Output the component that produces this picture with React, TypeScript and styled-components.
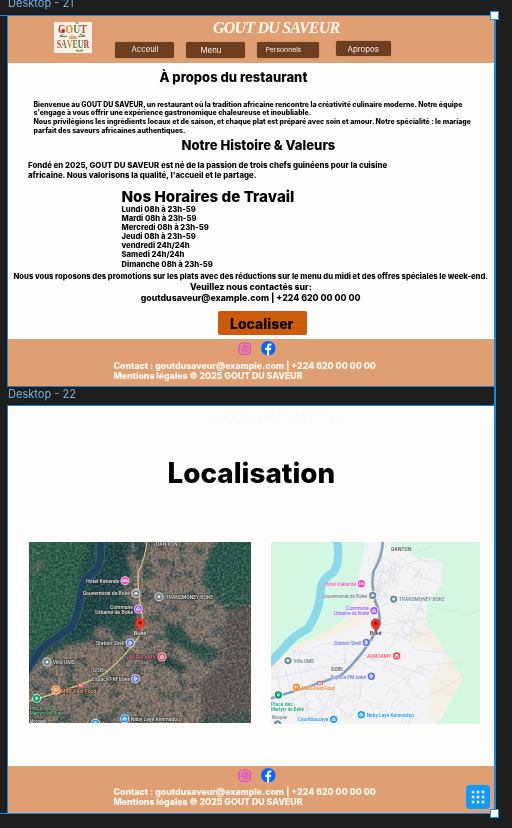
import React from 'react';
import styled, { createGlobalStyle } from 'styled-components';

const GlobalStyle = createGlobalStyle`
  * { box-sizing: border-box; }
  html, body { margin: 0; background: #1e1e1e; }
  body { width: 512px; height: 828px; overflow: hidden; font-family: Inter, sans-serif; }
  h1, h2, h3, p, ul { margin: 0; padding: 0; list-style: none; }
`;

const Canvas = styled.main`
  position: relative;
  width: 512px;
  height: 828px;
  padding: 0 16px 0 8px;
  overflow: hidden;
  background: #1e1e1e;
`;

const FrameLabel = styled.div<{ $height: number; $first?: boolean }>`
  display: flex;
  align-items: ${p => (p.$first ? 'flex-end' : 'flex-start')};
  height: ${p => p.$height}px;
  padding: ${p => (p.$first ? '0 0 6px' : '1px 0 0')};
  color: #6fb1e0;
  font-size: 11.05px;
  line-height: 14px;
  white-space: nowrap;
`;

const Frame = styled.section<{ $height: number }>`
  display: flex;
  flex-direction: column;
  width: 486.5px;
  height: ${p => p.$height}px;
  background: #fffdfb;
  outline: 1px solid #1b7fd0;
`;

const Header = styled.header`
  display: flex;
  height: 46.5px;
  background: #df9f72;
`;

const LogoSlot = styled.div`
  width: 107px;
  padding: 5.5px 0 0 46px;
  svg { display: block; }
`;

const HeaderBody = styled.div`
  flex: 1;
`;

const Brand = styled.h1<{ $ghost?: boolean }>`
  width: 130px;
  height: 24px;
  margin-left: ${p => (p.$ghost ? 205 : 98)}px;
  color: ${p => (p.$ghost ? '#fff9f6' : '#fff8f0')};
  font: italic 700 16px/24px 'Liberation Serif', serif;
  letter-spacing: -0.8px;
  white-space: nowrap;
`;

const Nav = styled.nav`
  display: flex;
  align-items: flex-start;
  padding-top: 1.6px;
`;

const NavButton = styled.button<{ $w: number; $h: number; $gap: number; $pad: number; $size: number; $drop: number }>`
  width: ${p => p.$w}px;
  height: ${p => p.$h}px;
  margin: ${p => p.$drop}px 0 0 ${p => p.$gap}px;
  padding: 0 0 0 ${p => p.$pad}px;
  border: 0;
  border-radius: 2px;
  background: #6d3f20;
  box-shadow: 0 0 1px #6d3f20;
  color: #f8ede5;
  font: 400 ${p => p.$size}px/14px Inter, sans-serif;
  text-align: left;
  white-space: nowrap;
`;

const Content = styled.div`
  display: flex;
  flex-direction: column;
  flex: 1;
`;

const Heading = styled.h2<{ $size: number; $left: number; $gap: number }>`
  margin: ${p => p.$gap}px 0 0 ${p => p.$left}px;
  font-weight: 800;
  font-size: ${p => p.$size}px;
  line-height: 16px;
  white-space: nowrap;
`;

const Copy = styled.p<{ $size: number; $line: number; $left: number; $gap: number }>`
  margin: ${p => p.$gap}px 0 0 ${p => p.$left}px;
  font-weight: 800;
  font-size: ${p => p.$size}px;
  line-height: ${p => p.$line}px;
  white-space: nowrap;
`;

const Hours = styled.ul`
  margin-left: 113.5px;
  font-weight: 800;
  font-size: 7.66px;
  line-height: 9.13px;
`;

const LocateButton = styled.button`
  width: 88.5px;
  height: 24px;
  margin: 7.7px 0 0 210px;
  padding: 1px 0 0 12px;
  border: 0;
  border-radius: 2px;
  background: #cb5b08;
  color: #000;
  font: 800 13.99px/23px Inter, sans-serif;
  text-align: left;
`;

const FooterBar = styled.footer<{ $height: number }>`
  height: ${p => p.$height}px;
  background: #df9f72;
  color: #fffaf5;
`;

const Socials = styled.div`
  display: flex;
  align-items: center;
  gap: 10px;
  height: 21.2px;
  padding: 0 0 1px 229.5px;
`;

const Title = styled.h2`
  margin: 22.5px 0 0 159.5px;
  height: 40px;
  font-weight: 800;
  font-size: 27.85px;
  line-height: 40px;
`;

const Maps = styled.div`
  display: flex;
  gap: 20px;
  padding: 49px 0 0 21px;
  svg { display: block; }
`;

const SelectionLine = styled.div<{ $x?: number; $y?: number }>`
  position: absolute;
  background: #1787e0;
  ${p => (p.$y !== undefined ? `left: 0; width: 495px; height: 1.5px; top: ${p.$y}px;` : `top: 15px; height: 798px; width: 2px; left: ${p.$x}px;`)}
`;

const Handle = styled.i<{ $y: number }>`
  position: absolute;
  left: 490px;
  top: ${p => p.$y}px;
  width: 9px;
  height: 9px;
  border: 1px solid #1592f0;
  background: #fff;
`;

const GridButton = styled.button`
  position: absolute;
  left: 466px;
  top: 785px;
  display: grid;
  grid-template-columns: repeat(3, 2px);
  place-content: center;
  gap: 3px;
  width: 24px;
  height: 24px;
  padding: 0;
  border: 0;
  border-radius: 4px;
  background: #1199fc;
`;

const Dot = styled.i`
  height: 2px;
  background: #fff;
  box-shadow: 0 0 0 0.5px rgba(255, 255, 255, 0.45);
`;

const Grain = styled.rect`
  mix-blend-mode: soft-light;
`;

const Logo = () => (
  <svg width="38" height="31" viewBox="0 0 114 93" fontFamily="'Liberation Serif', serif" fontWeight="700">
    <rect width="114" height="93" fill="#f8f2ea" />
    <text x="12" y="34" fontSize="35" textLength="86" lengthAdjust="spacingAndGlyphs">
      <tspan fill="#c93822">G</tspan><tspan fill="#e08a2b">O</tspan><tspan fill="#4f7f37">Û</tspan><tspan fill="#c84225">T</tspan>
    </text>
    <text x="8" y="79" fontSize="36" textLength="98" lengthAdjust="spacingAndGlyphs">
      <tspan fill="#c93822">S</tspan><tspan fill="#4f7f37">A</tspan><tspan fill="#d9792a">V</tspan><tspan fill="#6b7d32">E</tspan><tspan fill="#3f7138">U</tspan><tspan fill="#c93822">R</tspan>
    </text>
    <text x="45" y="51" fontSize="21" fill="#bb7a2a">du</text>
    <path d="M17 43h22M72 43h22M18 41l9-3M92 41l-15-4" stroke="#63743b" strokeWidth="3" />
    <path d="M64 86q9-8 12 1q10-9 13-1q-12 6-25 0" fill="#799a57" />
    <circle cx="27" cy="27" r="5" fill="#c32219" />
  </svg>
);

const Instagram = () => (
  <svg width="13.5" height="13.5" viewBox="0 0 42 42" fill="none" stroke="#e23fe4" strokeWidth="4">
    <rect x="3" y="3" width="36" height="36" rx="14" />
    <rect x="10.5" y="10.5" width="21" height="21" rx="7" strokeWidth="3" />
    <circle cx="21" cy="21" r="5" strokeWidth="3.4" />
    <circle cx="28" cy="14" r="1" strokeWidth="2" />
  </svg>
);

const Facebook = () => (
  <svg width="14.5" height="14.5" viewBox="0 0 24 24">
    <circle cx="12" cy="12" r="12" fill="#0866ff" />
    <path d="M10 24v-9H7v-3.8h3V9c0-3.4 1.8-5 4.7-5 1 0 1.8.1 2.5.3v3.3h-1.8c-1.4 0-1.9.7-1.9 2v1.6h3.5l-.7 3.8h-2.8v9z" fill="#fff" />
  </svg>
);

const Footer = ({ height, gap = 0 }: { height: number; gap?: number }) => (
  <FooterBar $height={height}>
    <Socials><Instagram /><Facebook /></Socials>
    <Copy $size={8.79} $line={10.6} $left={105.5} $gap={gap}>
      Contact : goutdusaveur@example.com | +224 620 00 00 00
    </Copy>
    <Copy $size={8.77} $line={10.6} $left={105.5} $gap={0}>Mentions légales © 2025 GOUT DU SAVEUR</Copy>
  </FooterBar>
);

type Place = { x: number; y: number; color: string; tx?: number; ty?: number; w?: number; lines?: string[]; text?: string; end?: boolean; kind: string };

const glyphs: Record<string, React.ReactNode> = {
  bed: <path d="M-6-4v8M-6 1H6V4M-2-2H6V1" />,
  star: <path d="M0-5v10M-5 0H5M-3-3l6 6M-3 3l6-6" />,
  hall: <path d="M-5 5V-2L0-5l5 3v7M-2 5V1h4v4" />,
  pump: <path d="M-4 5V-5h5V5zM1-2h3v5" />,
  dot: <circle r="3" fill="#fff" />,
  fork: <path d="M-3-5v10M3-5v10M-5-4v4h4v-4" />,
  tree: <path d="M0 5V0M-4 1L0-5 4 1z" />,
  shop: <path d="M-5-1h10v5H-5zM-4-4h8" />,
};

const Marker = ({ p, satellite }: { p: Place; satellite: boolean }) => (
  <g>
    <circle cx={p.x} cy={p.y} r="13.5" fill="#fff" opacity=".85" />
    <circle cx={p.x} cy={p.y} r="11" fill={p.color} />
    <g transform={`translate(${p.x} ${p.y})`} fill="none" stroke="#fff" strokeWidth="2.4">{glyphs[p.kind]}</g>
    {(p.lines ?? []).map((line, i) => (
      <text
        key={line}
        x={p.tx}
        y={(p.ty ?? p.y + 6) + i * 15}
        textAnchor={p.end ? 'end' : 'start'}
        textLength={i === (p.lines!.length - 1) ? p.w : undefined}
        lengthAdjust="spacingAndGlyphs"
        fill={satellite ? (p.text ?? '#e4e5e1') : (p.text ?? p.color)}
        stroke={satellite ? '#292c2b' : '#fff'}
        strokeWidth={satellite ? 3 : 1.5}
        paintOrder="stroke"
      >{line}</text>
    ))}
  </g>
);

const satellitePlaces: Place[] = [
  { x: 315, y: 135, color: '#f54bc4', kind: 'bed', tx: 298, end: true, w: 100, ty: 142, lines: ['Hotel Kakande'] },
  { x: 348, y: 173, color: '#71858e', kind: 'star', tx: 330, end: true, w: 142, ty: 179, lines: ['Gouvernorat de Boké'] },
  { x: 355, y: 220, color: '#a154f4', kind: 'hall', tx: 339, end: true, w: 113, ty: 220, lines: ['Commune', 'Urbaine de Boké'] },
  { x: 331, y: 322, color: '#6174db', kind: 'pump', tx: 314, end: true, w: 86, lines: ['Station Shell'] },
  { x: 81, y: 379, color: '#71858e', kind: 'dot', tx: 98, w: 67, lines: ['Villa UMS'] },
  { x: 347, y: 429, color: '#6174db', kind: 'pump', tx: 330, end: true, w: 114, lines: ['Espace FM boké'] },
  { x: 108, y: 463, color: '#fa8427', kind: 'fork', tx: 123, w: 106, ty: 471, lines: ['MMS Fast Food'], text: '#ffb177' },
  { x: 50, y: 488, color: '#0ca564', kind: 'tree', tx: 29, w: 102, ty: 522, lines: ['Place des', 'Martyrs de Boké'], text: '#80cda2' },
  { x: 426, y: 364, color: '#ed4659', kind: 'shop', tx: 408, end: true, w: 82, lines: ['AFRICAMY'], text: '#f17c87' },
  { x: 417, y: 183, color: '#71858e', kind: 'dot', tx: 437, w: 142, ty: 190, lines: ['TRANSMONEY BOKE'] },
  { x: 314, y: 549, color: '#1696f4', kind: 'shop', tx: 332, w: 148, ty: 557, lines: ['Naby Laye Kenmadou'] },
  { x: 226, y: 563, color: '#1696f4', kind: 'shop' },
];

const planPlaces: Place[] = [
  { x: 298, y: 146, color: '#f54bc4', kind: 'bed', tx: 282, end: true, w: 94, ty: 153, lines: ['Hotel Kakande'] },
  { x: 332, y: 181, color: '#71919c', kind: 'star', tx: 315, end: true, w: 136, ty: 188, lines: ['Gouvernorat de Boké'], text: '#657e88' },
  { x: 336, y: 227, color: '#a154f4', kind: 'hall', tx: 321, end: true, w: 106, ty: 226, lines: ['Commune', 'Urbaine de Boké'] },
  { x: 313, y: 322, color: '#6174db', kind: 'pump', tx: 298, end: true, w: 82, ty: 329, lines: ['Station Shell'] },
  { x: 78, y: 376, color: '#71919c', kind: 'dot', tx: 94, w: 62, lines: ['Villa UMS'], text: '#657e88' },
  { x: 328, y: 423, color: '#6174db', kind: 'pump', tx: 312, end: true, w: 106, ty: 431, lines: ['Espace FM boké'] },
  { x: 103, y: 456, color: '#fa8427', kind: 'fork', tx: 119, w: 100, ty: 464, lines: ['MMS Fast Food'], text: '#e6700e' },
  { x: 49, y: 479, color: '#0ca564', kind: 'tree', tx: 27, w: 99, ty: 511, lines: ['Place des', 'Martyrs de Boké'] },
  { x: 404, y: 362, color: '#ed4659', kind: 'shop', tx: 387, end: true, w: 72, ty: 369, lines: ['AFRICAMY'] },
  { x: 395, y: 192, color: '#71919c', kind: 'dot', tx: 411, w: 137, ty: 199, lines: ['TRANSMONEY BOKE'], text: '#657e88' },
  { x: 298, y: 538, color: '#1696f4', kind: 'shop', tx: 314, w: 142, ty: 545, lines: ['Naby Laye Kenmadou'] },
  { x: 215, y: 552, color: '#1696f4', kind: 'shop', tx: 199, end: true, w: 92, ty: 558, lines: ['Countbassaya'] },
  { x: 47, y: 566, color: '#71919c', kind: 'dot', tx: 29, w: 47, ty: 551, lines: ['Mosquée'], text: '#657e88' },
];

const Pin = ({ x, y }: { x: number; y: number }) => (
  <g transform={`translate(${x} ${y})`}>
    <path d="M0 0c-3-13-14-15-14-27a14 14 0 0 1 28 0c0 12-11 14-14 27z" fill="#e8392e" stroke="#b9251c" strokeWidth="1.5" />
    <circle cy="-27" r="5" fill="#8e150f" />
  </g>
);

/* Short street segments scattered with a fixed seed, so every render is identical. */
const streets = (seed: number, count: number, x0: number, y0: number, w: number, h: number, len: number) => {
  let s = seed;
  const next = () => (s = (s * 16807) % 2147483647) / 2147483647;
  let d = '';
  for (let i = 0; i < count; i++) {
    const x = x0 + next() * w;
    const y = y0 + next() * h;
    const a = next() * 0.9 + (next() > 0.5 ? 1.6 : 0);
    const l = len * (0.3 + next());
    d += `M${x.toFixed(0)} ${y.toFixed(0)}l${(Math.cos(a) * l).toFixed(0)} ${(Math.sin(a) * l).toFixed(0)}`;
  }
  return d;
};

const river = 'M239 10Q250 80 225 107Q188 127 181 177Q179 228 155 273Q110 306 70 334Q45 360 15 417';

const SatelliteMap = () => (
  <svg width="222" height="181.7" viewBox="27 19 666 545" preserveAspectRatio="none" fontFamily="Roboto, sans-serif" fontSize="15" fontWeight="500">
    <defs>
      <filter id="grain" x="0" y="0" width="1" height="1" colorInterpolationFilters="sRGB">
        <feTurbulence type="fractalNoise" baseFrequency=".14" numOctaves="2" seed="8" />
        <feColorMatrix values="2 0 0 0 -.5  2 0 0 0 -.5  2 0 0 0 -.5  0 0 0 0 1" />
      </filter>
      <filter id="groves" x="0" y="0" width="1" height="1" colorInterpolationFilters="sRGB">
        <feTurbulence type="fractalNoise" baseFrequency=".03" numOctaves="4" seed="5" />
        <feColorMatrix values="0 0 0 0 .2  0 0 0 0 .3  0 0 0 0 .3  0 7 0 0 -3.6" />
      </filter>
      <filter id="soft" x="-.2" y="-.2" width="1.4" height="1.4"><feGaussianBlur stdDeviation="6" /></filter>
    </defs>
    <rect x="27" y="19" width="666" height="545" fill="#7b7067" />
    <rect x="27" y="19" width="666" height="545" filter="url(#groves)" opacity=".65" />
    <path d={streets(41, 420, 300, 20, 270, 540, 24) + streets(97, 420, 60, 330, 420, 230, 24)} stroke="#b0967f" strokeWidth="2" opacity=".45" />
    <g filter="url(#soft)">
      <path d="M20 10H345L313 55 340 110 303 175 351 217 350 270 290 320 270 275 230 275 200 320 145 327 80 362 20 410Z" fill="#264d46" />
      <path d="M20 10H210L180 100 165 235 60 330 20 350Z" fill="#2f5e4c" />
      <path d="M245 20l80 20-15 120-70 100-70 50-30-30 60-100 20-90z" fill="#234447" />
      <path d="M590 10l110 0v200l-60 30-50-45-45-55 15-65z" fill="#2b574c" />
      <path d="M700 205l-70 20-25 80 0 70-60 70 0 130h150z" fill="#5c5753" />
      <path d="M435 255l50 20 25 40 70 20 25 30-50 12-120-70z" fill="#2a5047" />
      <path d="M395 350l50 10 60 35-20 15-70-25z" fill="#25443f" />
      <path d="M345 15l40 10-5 35-30 20z" fill="#2a4744" />
      <path d="M550 545l140-20v50H540z" fill="#425650" />
    </g>
    <path d="M27 90l45-18v25l-30 20zM30 30l35 20-20 10z" fill="#65695e" opacity=".5" />
    <path d={streets(73, 70, 540, 100, 145, 430, 45)} stroke="#8c8376" strokeWidth="2" opacity=".25" />
    <path d="M537 208l80 120-10 40M515 175l30 60 45 80M550 165l50 120M540 245l145-70M535 220l110-65M600 15l-40 40-150 5M575 220l60-15 60 5M370 355l210 0 70-30M505 400l180-30M515 560l15-160 30-35M395 20l5 130" fill="none" stroke="#8e8478" strokeWidth="2.5" opacity=".6" />
    <Grain x="27" y="19" width="666" height="545" filter="url(#grain)" opacity=".4" />
    <path d={river} fill="none" stroke="#4f7672" strokeWidth="25" />
    <path d={river} fill="none" stroke="#1e4260" strokeWidth="22" />
    <path d="M382 10Q377 65 355 110Q352 160 363 220Q378 278 353 308Q290 393 235 425Q135 467 27 496" fill="none" stroke="#dfc784" strokeWidth="3.5" />
    <rect x="173" y="444" width="19" height="13" rx="2" fill="#d94b56" />
    <g fill="#e4e5e1" stroke="#292c2b" strokeWidth="3" paintOrder="stroke">
      <text x="407" y="31" textLength="66">DANTON</text>
      <text x="218" y="410" textLength="36">GOBI</text>
      <text x="29" y="563" textLength="50" lengthAdjust="spacingAndGlyphs">Mosquée</text>
      <text x="176" y="455" fontSize="10" stroke="none">N3</text>
    </g>
    {satellitePlaces.map(p => <Marker key={`${p.x}-${p.y}`} p={p} satellite />)}
    <text x="341" y="299" fontSize="17" fill="#fff" stroke="#222" strokeWidth="3" paintOrder="stroke">Boké</text>
    <Pin x={360} y={288} />
  </svg>
);

const PlanMap = () => (
  <svg width="209" height="182" viewBox="27 21 627 545" preserveAspectRatio="none" fontFamily="Roboto, sans-serif" fontSize="15" fontWeight="500">
    <rect x="27" y="21" width="627" height="545" fill="#f3f2f4" />
    <path d="M27 385L85 330 150 300 215 280 275 235 310 180 350 150 340 240 260 290 190 310 120 335 75 365 45 400 27 450Z" fill="#f6efe5" />
    <path d="M27 21H310L300 80 290 115 295 150 265 225 240 260 190 290 100 330 27 390Z" fill="#d3f7e2" />
    <path d="M380 21H654V566H518L535 555 603 430 490 255 500 190 540 150 538 78 520 72 465 70 440 50 405 40Z" fill="#d3f7e2" />
    <path d="M442 280H480L486 250 603 430 525 560 492 548 507 500 500 440 555 352 440 320Z" fill="#f4efe5" />
    <g fill="none" stroke="#d8dee4" strokeWidth="2">
      <path d={streets(23, 80, 345, 70, 150, 230, 36) + streets(61, 100, 100, 340, 370, 210, 38) + streets(15, 30, 320, 60, 60, 150, 28)} />
      <path d="M345 290Q440 290 460 345L555 352M395 455L480 390 595 382M485 490L595 430M360 390L430 430 470 490M45 410L70 560M70 400L110 560M110 390L145 560M30 430L310 370M80 500L290 390M145 550L320 435M240 330L310 390M135 355Q180 310 220 330L270 315M170 560L240 400M345 370L490 420M410 60L490 130 530 145M360 115L470 75 545 80M340 220L440 180 500 175M360 270L490 250M430 65L510 35" />
      <path d="M490 210L550 225 585 230 604 240 654 225" />
    </g>
    <path d="M224 10Q237 80 214 112Q174 132 175 181Q168 237 137 281Q94 302 67 337Q45 362 18 388" fill="none" stroke="#8bd7eb" strokeWidth="25" />
    <path d="M363 10Q362 66 335 108Q326 145 340 200Q365 255 341 290Q300 365 238 420Q155 451 20 491" fill="none" stroke="#d4e0ed" strokeWidth="10" />
    <path d="M363 10Q362 66 335 108Q326 145 340 200Q365 255 341 290Q300 365 238 420Q155 451 20 491" fill="none" stroke="#829fbd" strokeWidth="7" />
    <rect x="165" y="438" width="18" height="12" rx="2" fill="#e05858" />
    <text x="168" y="448" fontSize="10" fill="#fff">N3</text>
    <g fill="#47494d" stroke="#fff" strokeWidth="2" paintOrder="stroke">
      <text x="387" y="48" textLength="61">DANTON</text>
      <text x="207" y="406" textLength="35">GOBI</text>
    </g>
    {planPlaces.map(p => <Marker key={`${p.x}-${p.y}`} p={p} satellite={false} />)}
    <text x="323" y="300" fontSize="16" fill="#202124" stroke="#fff" strokeWidth="2" paintOrder="stroke">Boké</text>
    <Pin x={341} y={292} />
  </svg>
);

export default function App() {
  return (
    <Canvas>
      <GlobalStyle />
      <FrameLabel $height={16} $first>Desktop - 21</FrameLabel>
      <Frame $height={369.5}>
        <Header>
          <LogoSlot><Logo /></LogoSlot>
          <HeaderBody>
            <Brand>GOUT DU SAVEUR</Brand>
            <Nav>
              <NavButton $w={58.5} $h={16} $gap={0} $pad={16.5} $size={7.73} $drop={0}>Acceuil</NavButton>
              <NavButton $w={58.5} $h={16} $gap={12.5} $pad={14.5} $size={7.87} $drop={0.7}>Menu</NavButton>
              <NavButton $w={62} $h={16} $gap={12.5} $pad={8.5} $size={6.85} $drop={0.5}>Personnels</NavButton>
              <NavButton $w={55.5} $h={14.5} $gap={16.5} $pad={12} $size={7.87} $drop={-0.3}>Apropos</NavButton>
            </Nav>
          </HeaderBody>
        </Header>
        <Content>
          <Heading $size={13.03} $left={151.5} $gap={6.5}>À propos du restaurant</Heading>
          <Copy $size={6.95} $line={8.6} $left={25.5} $gap={15.8}>
            Bienvenue au GOUT DU SAVEUR, un restaurant où la tradition africaine rencontre la créativité culinaire moderne. Notre équipe<br />
            s'engage à vous offrir une expérience gastronomique chaleureuse et inoubliable.<br />
            Nous privilégions les ingrédients locaux et de saison, et chaque plat est préparé avec soin et amour. Notre spécialité : le mariage<br />
            parfait des saveurs africaines authentiques.
          </Copy>
          <Heading $size={13.07} $left={173.5} $gap={1.6}>Notre Histoire &amp; Valeurs</Heading>
          <Copy $size={7.83} $line={9.4} $left={20} $gap={8.6}>
            Fondé en 2025, GOUT DU SAVEUR est né de la passion de trois chefs guinéens pour la cuisine<br />
            africaine. Nous valorisons la qualité, l'accueil et le partage.
          </Copy>
          <Heading $size={15.17} $left={113.5} $gap={8.6}>Nos Horaires de Travail</Heading>
          <Hours>
            <li>Lundi 08h à 23h-59</li>
            <li>Mardi 08h à 23h-59</li>
            <li>Mercredi 08h à 23h-59</li>
            <li>Jeudi 08h à 23h-59</li>
            <li>vendredi 24h/24h</li>
            <li>Samedi 24h/24h</li>
            <li>Dimanche 08h à 23h-59</li>
          </Hours>
          <Copy $size={7.63} $line={10} $left={5.5} $gap={3.8}>
            Nous vous roposons des promotions sur les plats avec des réductions sur le menu du midi et des offres spéciales le week-end.
          </Copy>
          <Copy $size={8.7} $line={10.6} $left={182} $gap={0}>Veuillez nous contactés sur:</Copy>
          <Copy $size={8.75} $line={10.6} $left={132.7} $gap={0}>goutdusaveur@example.com | +224 620 00 00 00</Copy>
          <LocateButton>Localiser</LocateButton>
        </Content>
        <Footer height={47} gap={1} />
      </Frame>
      <FrameLabel $height={20.5}>Desktop - 22</FrameLabel>
      <Frame $height={407}>
        <Content>
          <Brand $ghost>GOUT DU SAVEUR</Brand>
          <Title>Localisation</Title>
          <Maps><SatelliteMap /><PlanMap /></Maps>
        </Content>
        <Footer height={47.5} />
      </Frame>
      <SelectionLine $y={14.5} />
      <SelectionLine $y={812.5} />
      <SelectionLine $x={494} />
      <Handle $y={11} />
      <Handle $y={809} />
      <GridButton>{Array.from({ length: 9 }, (_, i) => <Dot key={i} />)}</GridButton>
    </Canvas>
  );
}
